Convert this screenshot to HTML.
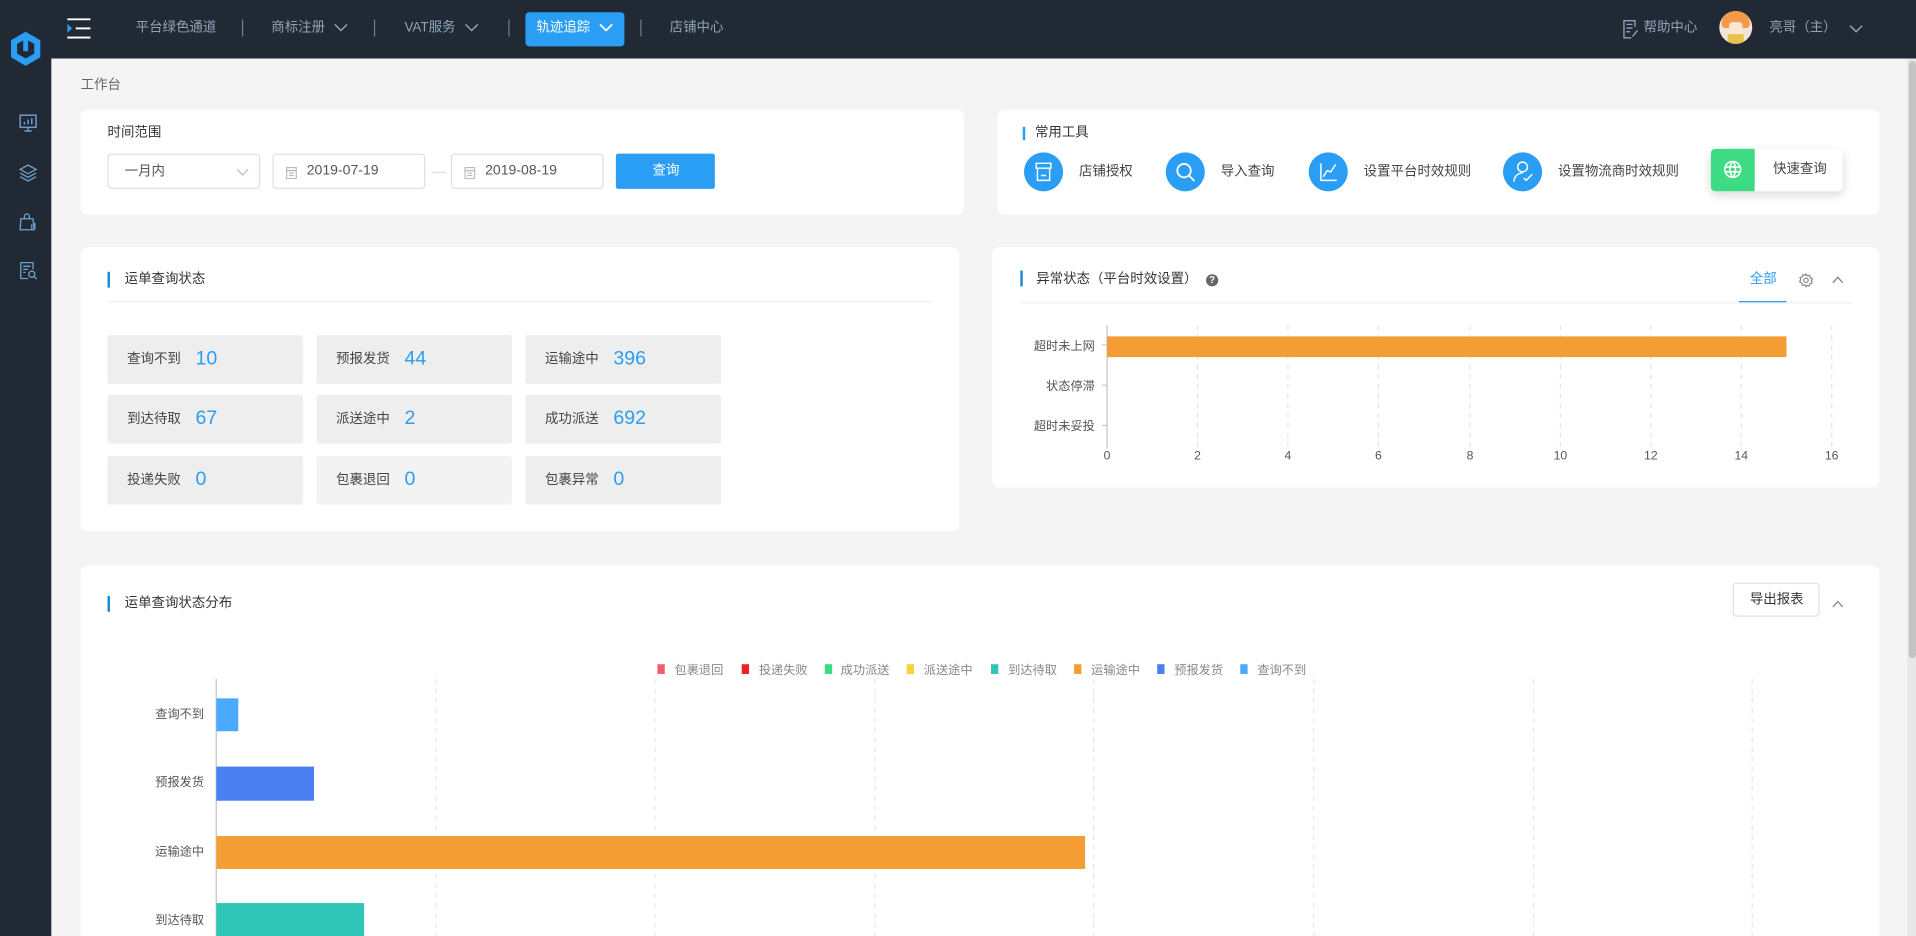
<!DOCTYPE html>
<html><head><meta charset="utf-8">
<style>
*{margin:0;padding:0;box-sizing:border-box}
html,body{width:1916px;height:936px;overflow:hidden;background:#f4f4f4}
body{font-family:"Liberation Sans","Noto Sans CJK SC",sans-serif;color:#333}
#w{position:absolute;left:0;top:0;width:1568px;height:768px;transform:scale(1.22194,1.21875);transform-origin:0 0;background:#f4f4f4;overflow:hidden}
.a{position:absolute}
.t{position:absolute;white-space:nowrap;line-height:1}
.card{position:absolute;background:#fff;border-radius:6px}
.nav{color:#8fa3b8;font-size:11px;top:18px}
.sep{position:absolute;top:16px;width:1px;height:14px;background:#6b7b8c}
.bar{position:absolute;width:2px;background:#1e88d8}
.tile{position:absolute;width:160px;height:40px;background:#eee;border-radius:2px}
.tile span{position:absolute;left:16px;top:15px;font-size:11px;color:#444;line-height:1}
.tile b{position:absolute;left:72px;top:12px;font-size:16px;font-weight:normal;color:#2a9df4;line-height:1}
.inp{position:absolute;height:29px;border:1px solid #dcdfe6;border-radius:3px;background:#fff;font-size:11px;color:#555}
.circ{position:absolute;width:32px;height:32px;border-radius:50%;background:#2a9df4;top:125px}
.tl{position:absolute;top:136px;font-size:11px;color:#444;white-space:nowrap;line-height:1}
.lab{position:absolute;font-size:10px;color:#555;white-space:nowrap;line-height:1}
</style></head><body><div id="w">
<div class="a" style="left:0;top:0;width:42px;height:768px;background:#212a34"></div>
<div class="a" style="left:0;top:0;width:1568px;height:48px;background:#212a34"></div>
<svg class="a" style="left:7px;top:25px" width="28" height="30" viewBox="0 0 28 30"><path d="M14 1 L26 8 L26 22 L14 29 L2 22 L2 8 Z" fill="#2a9df4"/><path d="M14 7 L21 11 L21 19 L14 23 L7 19 L7 11 Z" fill="#212a34"/><rect x="12" y="6" width="4" height="11" fill="#2a9df4"/></svg>
<svg class="a" style="left:15px;top:93px" width="16" height="16" viewBox="0 0 16 16" fill="none" stroke="#6f9ec9" stroke-width="1.2"><rect x="1.5" y="1.5" width="13" height="10"/><path d="M5 14.5h6M8 11.5v3M5 9V7M8 9V5M11 9V4"/></svg>
<svg class="a" style="left:15px;top:134px" width="16" height="16" viewBox="0 0 16 16" fill="none" stroke="#6f9ec9" stroke-width="1.1"><path d="M8 1.5L14.5 5 8 8.5 1.5 5Z M1.5 8L8 11.5 14.5 8 M1.5 11L8 14.5 14.5 11"/></svg>
<svg class="a" style="left:15px;top:174px" width="16" height="16" viewBox="0 0 16 16" fill="none" stroke="#6f9ec9" stroke-width="1.1"><path d="M2 5.5h10l1 9H1.5Z M5 5.5V3.5a2 2 0 0 1 4 0v2 M11 10v4M13.5 9v5"/></svg>
<svg class="a" style="left:15px;top:214px" width="16" height="16" viewBox="0 0 16 16" fill="none" stroke="#6f9ec9" stroke-width="1.1"><path d="M12 7V1.5H2v13h6 M4 4.5h6M4 7h4M4 9.5h2"/><circle cx="11" cy="11" r="2.5"/><path d="M13 13l2 2"/></svg>
<svg class="a" style="left:55px;top:15px" width="20" height="17" viewBox="0 0 20 17"><rect x="0" y="0" width="19" height="1.6" fill="#fff"/><rect x="7" y="7.5" width="12" height="1.6" fill="#fff"/><rect x="0" y="15" width="19" height="1.6" fill="#fff"/><path d="M0 4.5L4 8.3 0 12Z" fill="#2a9df4"/></svg>
<div class="t nav" style="left:111px">平台绿色通道</div>
<div class="sep" style="left:198px"></div>
<div class="t nav" style="left:222px">商标注册</div>
<svg class="a" style="left:273px;top:19px" width="12" height="8" viewBox="0 0 12 8" fill="none" stroke="#8fa3b8" stroke-width="1.2"><path d="M1 1l5 5 5-5"/></svg>
<div class="sep" style="left:306px"></div>
<div class="t nav" style="left:331px">VAT服务</div>
<svg class="a" style="left:380px;top:19px" width="12" height="8" viewBox="0 0 12 8" fill="none" stroke="#8fa3b8" stroke-width="1.2"><path d="M1 1l5 5 5-5"/></svg>
<div class="sep" style="left:416px"></div>
<div class="a" style="left:430px;top:10px;width:81px;height:28px;background:#2a9df4;border-radius:3px"></div>
<div class="t" style="left:439px;top:18px;font-size:11px;color:#fff">轨迹追踪</div>
<svg class="a" style="left:490px;top:19px" width="12" height="8" viewBox="0 0 12 8" fill="none" stroke="#fff" stroke-width="1.4"><path d="M1 1l5 5 5-5"/></svg>
<div class="sep" style="left:524px"></div>
<div class="t nav" style="left:548px">店铺中心</div>
<svg class="a" style="left:1328px;top:16px" width="13" height="16" viewBox="0 0 13 16" fill="none" stroke="#8fa3b8" stroke-width="1.1"><path d="M10 6V1H1v14h6M3 4h5M3 7h5M3 10h3M8 14l4-5"/></svg>
<div class="t nav" style="left:1345px">帮助中心</div>
<div class="a" style="left:1407px;top:9px;width:27px;height:27px;border-radius:50%;background:#f5e3d3;overflow:hidden"><div class="a" style="left:2px;top:0;width:23px;height:14px;background:#f39a4a;border-radius:10px 10px 3px 3px"></div><div class="a" style="left:8px;top:9px;width:11px;height:10px;background:#fbe6d4;border-radius:3px"></div><div class="a" style="left:7px;top:19px;width:13px;height:8px;background:#e9c24a"></div></div>
<div class="t nav" style="left:1448px">亮哥（主）</div>
<svg class="a" style="left:1513px;top:20px" width="12" height="8" viewBox="0 0 12 8" fill="none" stroke="#8fa3b8" stroke-width="1.2"><path d="M1 1l5 5 5-5"/></svg>
<div class="a" style="left:1561px;top:48px;width:7px;height:720px;background:#e8e8e8"></div>
<div class="a" style="left:1562px;top:50px;width:6px;height:490px;background:#c4c4c4;border-radius:3px"></div>

<div class="t" style="left:66px;top:65px;font-size:11px;color:#666">工作台</div>

<div class="card" style="left:66px;top:90px;width:723px;height:86px"></div>
<div class="t" style="left:88px;top:104px;font-size:11px;color:#333">时间范围</div>
<div class="inp" style="left:88px;top:126px;width:125px"><span class="t" style="left:13px;top:9px">一月内</span><svg class="a" style="left:104px;top:11px" width="11" height="7" viewBox="0 0 11 7" fill="none" stroke="#bbb"><path d="M1 1l4.5 4.5L10 1"/></svg></div>
<div class="inp" style="left:223px;top:126px;width:125px"><svg class="a" style="left:10px;top:9px" width="9" height="11" viewBox="0 0 9 11" fill="none" stroke="#bbb"><rect x=".5" y="1.5" width="8" height="9"/><path d="M.5 4h8M2.5 6h4M2.5 8h4"/></svg><span class="t" style="left:27px;top:8px;font-size:11.5px">2019-07-19</span></div>
<div class="a" style="left:353px;top:141px;width:12px;height:1px;background:#ddd"></div>
<div class="inp" style="left:369px;top:126px;width:125px"><svg class="a" style="left:10px;top:9px" width="9" height="11" viewBox="0 0 9 11" fill="none" stroke="#bbb"><rect x=".5" y="1.5" width="8" height="9"/><path d="M.5 4h8M2.5 6h4M2.5 8h4"/></svg><span class="t" style="left:27px;top:8px;font-size:11.5px">2019-08-19</span></div>
<div class="a" style="left:504px;top:126px;width:81px;height:29px;background:#2a9df4;border-radius:2px"></div>
<div class="t" style="left:534px;top:135px;font-size:11px;color:#fff">查询</div>

<div class="card" style="left:816px;top:90px;width:722px;height:86px"></div>
<div class="bar" style="left:837px;top:104px;height:11px;background:#2a9df4;width:1.5px"></div>
<div class="t" style="left:847px;top:104px;font-size:11px;color:#333">常用工具</div>
<div class="circ" style="left:838px"><svg class="a" style="left:9px;top:8px" width="14" height="16" viewBox="0 0 14 16" fill="none" stroke="#fff" stroke-width="1.2"><path d="M1 1h12v4H1z M2 5v10h10V5 M5 11h4"/></svg></div>
<div class="tl" style="left:883px">店铺授权</div>
<div class="circ" style="left:954px"><svg class="a" style="left:8px;top:8px" width="17" height="17" viewBox="0 0 17 17" fill="none" stroke="#fff" stroke-width="1.5"><circle cx="7" cy="7" r="5.5"/><path d="M11 11l4.5 4.5"/></svg></div>
<div class="tl" style="left:999px">导入查询</div>
<div class="circ" style="left:1071px"><svg class="a" style="left:9px;top:8px" width="15" height="16" viewBox="0 0 15 16" fill="none" stroke="#fff" stroke-width="1.2"><path d="M1 1v14h13 M3 12l3-5 3 1 4-6"/></svg></div>
<div class="tl" style="left:1116px">设置平台时效规则</div>
<div class="circ" style="left:1230px"><svg class="a" style="left:8px;top:7px" width="17" height="18" viewBox="0 0 17 18" fill="none" stroke="#fff" stroke-width="1.2"><circle cx="8" cy="5" r="4"/><path d="M1 17c0-4 3-7 7-7 M9 14l2 2 5-5"/></svg></div>
<div class="tl" style="left:1275px">设置物流商时效规则</div>
<div class="a" style="left:1400px;top:122px;width:108px;height:35px;background:#fff;border-radius:4px;box-shadow:0 3px 8px rgba(0,0,0,.15);overflow:hidden"><div class="a" style="left:0;top:0;width:36px;height:35px;background:#3ddc84"></div><svg class="a" style="left:10px;top:9px" width="16" height="16" viewBox="0 0 16 16" fill="none" stroke="#fff" stroke-width="1.3"><circle cx="8" cy="8" r="6.5"/><path d="M2 6h12M2 10h12M8 1.5c-3 3-3 10 0 13M8 1.5c3 3 3 10 0 13"/></svg></div>
<div class="tl" style="left:1451px;top:134px">快速查询</div>

<div class="card" style="left:66px;top:203px;width:719px;height:233px"></div>
<div class="bar" style="left:88px;top:223px;height:13px"></div>
<div class="t" style="left:102px;top:224px;font-size:11px;color:#333">运单查询状态</div>
<div class="a" style="left:88px;top:247px;width:675px;height:1px;background:#eef0f2"></div>
<div class="tile" style="left:88px;top:275px"><span>查询不到</span><b>10</b></div>
<div class="tile" style="left:259px;top:275px"><span>预报发货</span><b>44</b></div>
<div class="tile" style="left:430px;top:275px"><span>运输途中</span><b>396</b></div>
<div class="tile" style="left:88px;top:324px"><span>到达待取</span><b>67</b></div>
<div class="tile" style="left:259px;top:324px"><span>派送途中</span><b>2</b></div>
<div class="tile" style="left:430px;top:324px"><span>成功派送</span><b>692</b></div>
<div class="tile" style="left:88px;top:374px"><span>投递失败</span><b>0</b></div>
<div class="tile" style="left:259px;top:374px;background:#f3f3f3"><span>包裹退回</span><b>0</b></div>
<div class="tile" style="left:430px;top:374px"><span>包裹异常</span><b>0</b></div>

<div class="card" style="left:812px;top:203px;width:726px;height:197px"></div>
<div class="bar" style="left:835px;top:222px;height:13px"></div>
<div class="t" style="left:848px;top:224px;font-size:11px;color:#333">异常状态（平台时效设置）</div>
<div class="a" style="left:987px;top:225px;width:10px;height:10px;border-radius:50%;background:#666;color:#fff;font-size:8px;text-align:center;line-height:10px;font-weight:bold">?</div>
<div class="t" style="left:1432px;top:224px;font-size:11px;color:#2a9df4">全部</div>
<div class="a" style="left:1423px;top:247px;width:39px;height:1.5px;background:#2a9df4"></div>
<svg class="a" style="left:1472px;top:224px" width="12" height="12" viewBox="0 0 12 12" fill="none" stroke="#888" stroke-width="1"><path d="M6 .8l1.2 1.5 1.9-.3.4 1.9 1.7.9-.9 1.7.6 1.8-1.8.6-.6 1.8-1.8-.6L6 11.2 4.8 9.7l-1.9.3-.4-1.9L.8 7.2l.9-1.7L1.1 3.7l1.8-.6.6-1.8 1.8.6Z"/><circle cx="6" cy="6" r="1.8"/></svg>
<svg class="a" style="left:1499px;top:226px" width="10" height="7" viewBox="0 0 10 7" fill="none" stroke="#888" stroke-width="1.1"><path d="M1 6l4-4.5L9 6"/></svg>
<div class="a" style="left:835px;top:248px;width:681px;height:1px;background:#eef0f2"></div>
<svg class="a" style="left:812px;top:260px" width="726" height="130">
<g stroke="#e4e4e4" stroke-dasharray="4,4" stroke-width="1">
<line x1="168" y1="7" x2="168" y2="108"/><line x1="242" y1="7" x2="242" y2="108"/><line x1="316" y1="7" x2="316" y2="108"/><line x1="391" y1="7" x2="391" y2="108"/><line x1="465" y1="7" x2="465" y2="108"/><line x1="539" y1="7" x2="539" y2="108"/><line x1="613" y1="7" x2="613" y2="108"/><line x1="687" y1="7" x2="687" y2="108"/>
</g>
<line x1="94" y1="7" x2="94" y2="108" stroke="#ccc" stroke-width="1.2"/>
<g stroke="#ccc"><line x1="90" y1="23" x2="94" y2="23"/><line x1="90" y1="56" x2="94" y2="56"/><line x1="90" y1="89" x2="94" y2="89"/></g>
<rect x="94" y="16" width="556" height="17" fill="#f59d35"/>
<g font-size="10" fill="#555" text-anchor="end" font-family="Liberation Sans,Noto Sans CJK SC,sans-serif"><text x="84" y="27">超时未上网</text><text x="84" y="60">状态停滞</text><text x="84" y="93">超时未妥投</text></g>
<g font-size="10" fill="#555" text-anchor="middle" font-family="Liberation Sans,sans-serif"><text x="94" y="117">0</text><text x="168" y="117">2</text><text x="242" y="117">4</text><text x="316" y="117">6</text><text x="391" y="117">8</text><text x="465" y="117">10</text><text x="539" y="117">12</text><text x="613" y="117">14</text><text x="687" y="117">16</text></g>
</svg>

<div class="card" style="left:66px;top:464px;width:1472px;height:320px"></div>
<div class="bar" style="left:88px;top:489px;height:13px"></div>
<div class="t" style="left:102px;top:490px;font-size:11px;color:#333">运单查询状态分布</div>
<div class="a" style="left:1418px;top:478px;width:71px;height:28px;border:1px solid #dcdfe6;border-radius:3px"></div>
<div class="t" style="left:1432px;top:487px;font-size:11px;color:#333">导出报表</div>
<svg class="a" style="left:1499px;top:492px" width="10" height="7" viewBox="0 0 10 7" fill="none" stroke="#888" stroke-width="1.1"><path d="M1 6l4-4.5L9 6"/></svg>
<svg class="a" style="left:66px;top:530px" width="1472" height="238">
<g font-size="10" fill="#888" font-family="Liberation Sans,Noto Sans CJK SC,sans-serif">
<rect x="472" y="15" width="6" height="8" fill="#f45b69"/><text x="486" y="23">包裹退回</text>
<rect x="541" y="15" width="6" height="8" fill="#ee2222"/><text x="555" y="23">投递失败</text>
<rect x="609" y="15" width="6" height="8" fill="#3ddc84"/><text x="622" y="23">成功派送</text>
<rect x="676" y="15" width="6" height="8" fill="#f7d23a"/><text x="690" y="23">派送途中</text>
<rect x="745" y="15" width="6" height="8" fill="#2ec4b6"/><text x="759" y="23">到达待取</text>
<rect x="813" y="15" width="6" height="8" fill="#f59d35"/><text x="827" y="23">运输途中</text>
<rect x="881" y="15" width="6" height="8" fill="#4a7ff2"/><text x="895" y="23">预报发货</text>
<rect x="949" y="15" width="6" height="8" fill="#4aaaff"/><text x="963" y="23">查询不到</text>
</g>
<g stroke="#e8e8e8" stroke-dasharray="4,4"><line x1="291" y1="27" x2="291" y2="238"/><line x1="470" y1="27" x2="470" y2="238"/><line x1="650" y1="27" x2="650" y2="238"/><line x1="829" y1="27" x2="829" y2="238"/><line x1="1009" y1="27" x2="1009" y2="238"/><line x1="1189" y1="27" x2="1189" y2="238"/><line x1="1368" y1="27" x2="1368" y2="238"/></g>
<line x1="111" y1="27" x2="111" y2="238" stroke="#ccc" stroke-width="1.2"/>
<rect x="111" y="43" width="18" height="27" fill="#4aaaff"/>
<rect x="111" y="99" width="80" height="28" fill="#4a7ff2"/>
<rect x="111" y="156" width="711" height="27" fill="#f59d35"/>
<rect x="111" y="211" width="121" height="30" fill="#2ec4b6"/>
<g font-size="10" fill="#555" text-anchor="end" font-family="Liberation Sans,Noto Sans CJK SC,sans-serif"><text x="101" y="59">查询不到</text><text x="101" y="115">预报发货</text><text x="101" y="172">运输途中</text><text x="101" y="228">到达待取</text></g>
</svg>
</div></body></html>
